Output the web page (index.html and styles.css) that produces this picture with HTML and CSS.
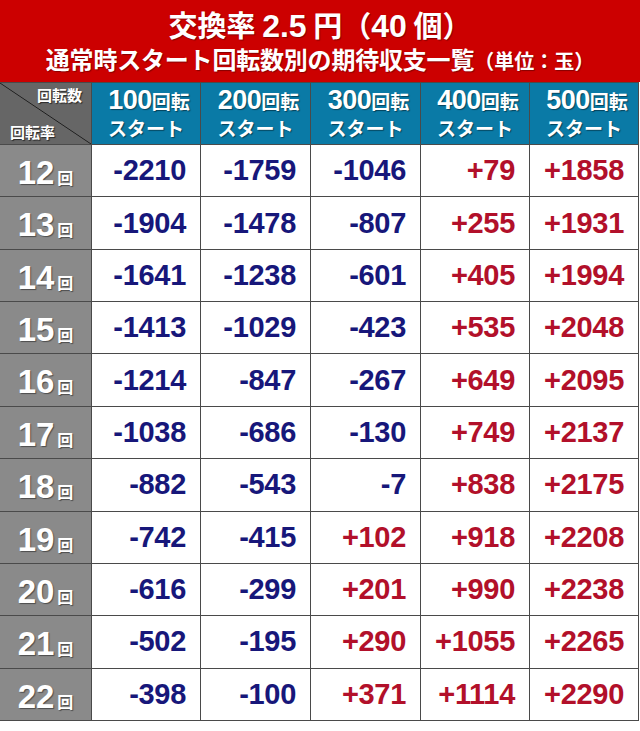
FILE: index.html
```html
<!DOCTYPE html>
<html lang="ja">
<head>
<meta charset="utf-8">
<title>交換率 2.5円 期待収支一覧</title>
<link rel="stylesheet" href="styles.css">
</head>
<body>
<div class="sheet">
  <header class="title">
    <div class="t1">交換率 <span class="lat">2.5</span> 円（<span class="lat">40</span> 個）</div>
    <div class="t2">通常時スタート回転数別の期待収支一覧<span class="unit">（単位：玉）</span></div>
  </header>
  <div class="grid">
    <div class="corner"><span class="c-top">回転数</span><span class="c-bot">回転率</span></div>
    <div class="colh"><div class="l1"><span class="n">100</span>回転</div><div class="l2">スタート</div></div>
    <div class="colh"><div class="l1"><span class="n">200</span>回転</div><div class="l2">スタート</div></div>
    <div class="colh"><div class="l1"><span class="n">300</span>回転</div><div class="l2">スタート</div></div>
    <div class="colh"><div class="l1"><span class="n">400</span>回転</div><div class="l2">スタート</div></div>
    <div class="colh"><div class="l1"><span class="n">500</span>回転</div><div class="l2">スタート</div></div>

    <div class="rowh"><span class="n">12</span><span class="k">回</span></div>
    <div class="v neg">-2210</div><div class="v neg">-1759</div><div class="v neg">-1046</div><div class="v pos">+79</div><div class="v pos">+1858</div>

    <div class="rowh"><span class="n">13</span><span class="k">回</span></div>
    <div class="v neg">-1904</div><div class="v neg">-1478</div><div class="v neg">-807</div><div class="v pos">+255</div><div class="v pos">+1931</div>

    <div class="rowh"><span class="n">14</span><span class="k">回</span></div>
    <div class="v neg">-1641</div><div class="v neg">-1238</div><div class="v neg">-601</div><div class="v pos">+405</div><div class="v pos">+1994</div>

    <div class="rowh"><span class="n">15</span><span class="k">回</span></div>
    <div class="v neg">-1413</div><div class="v neg">-1029</div><div class="v neg">-423</div><div class="v pos">+535</div><div class="v pos">+2048</div>

    <div class="rowh"><span class="n">16</span><span class="k">回</span></div>
    <div class="v neg">-1214</div><div class="v neg">-847</div><div class="v neg">-267</div><div class="v pos">+649</div><div class="v pos">+2095</div>

    <div class="rowh"><span class="n">17</span><span class="k">回</span></div>
    <div class="v neg">-1038</div><div class="v neg">-686</div><div class="v neg">-130</div><div class="v pos">+749</div><div class="v pos">+2137</div>

    <div class="rowh"><span class="n">18</span><span class="k">回</span></div>
    <div class="v neg">-882</div><div class="v neg">-543</div><div class="v neg">-7</div><div class="v pos">+838</div><div class="v pos">+2175</div>

    <div class="rowh"><span class="n">19</span><span class="k">回</span></div>
    <div class="v neg">-742</div><div class="v neg">-415</div><div class="v pos">+102</div><div class="v pos">+918</div><div class="v pos">+2208</div>

    <div class="rowh"><span class="n">20</span><span class="k">回</span></div>
    <div class="v neg">-616</div><div class="v neg">-299</div><div class="v pos">+201</div><div class="v pos">+990</div><div class="v pos">+2238</div>

    <div class="rowh"><span class="n">21</span><span class="k">回</span></div>
    <div class="v neg">-502</div><div class="v neg">-195</div><div class="v pos">+290</div><div class="v pos">+1055</div><div class="v pos">+2265</div>

    <div class="rowh"><span class="n">22</span><span class="k">回</span></div>
    <div class="v neg">-398</div><div class="v neg">-100</div><div class="v pos">+371</div><div class="v pos">+1114</div><div class="v pos">+2290</div>
  </div>
</div>
</body>
</html>
```

FILE: styles.css
```css
html, body {
  margin: 0;
  padding: 0;
  background: #ffffff;
}

body {
  font-family: "Noto Sans CJK JP", "Liberation Sans", sans-serif;
  width: 640px;
}

.sheet {
  width: 640px;
}

.title {
  background: #cc0000;
  height: 82px;
  box-sizing: border-box;
  padding-top: 7px;
  color: #ffffff;
  text-align: center;
  font-weight: 700;
  text-shadow: 1px 1px 1px rgba(0, 0, 0, 0.35);
}

.t1 {
  font-size: 29px;
  line-height: 34px;
  white-space: nowrap;
}

.t1 .lat {
  font-family: "Liberation Sans", sans-serif;
  font-size: 32px;
  font-weight: 700;
}

.t2 {
  font-size: 24px;
  line-height: 30px;
  margin-top: 1px;
  white-space: nowrap;
  letter-spacing: -0.2px;
}

.t2 .unit {
  font-size: 20px;
  letter-spacing: 0;
}

.grid {
  display: grid;
  grid-template-columns: 91px 108px 109px 109px 108px 108px;
  grid-template-rows: 61px repeat(11, 1fr);
  gap: 1px;
  width: 639px;
  height: 639px;
  box-sizing: border-box;
  padding: 1px 1px 1px 0;
  background: #4a4a4a;
}

.corner {
  background-color: #666666;
  background-image: linear-gradient(to top right, transparent calc(50% - 0.8px), #1e1e1e 50%, transparent calc(50% + 0.8px));
  display: flex;
  flex-direction: column;
  justify-content: space-between;
  padding: 2px 9px 3px 10px;
  color: #ffffff;
  font-size: 15px;
  font-weight: 700;
  line-height: 19px;
  text-shadow: 1px 1px 1px rgba(0, 0, 0, 0.6);
}

.c-top {
  align-self: flex-end;
}

.c-bot {
  align-self: flex-start;
}

.colh {
  background: #0a7aa6;
  color: #ffffff;
  display: flex;
  flex-direction: column;
  align-items: center;
  justify-content: center;
  font-weight: 700;
  text-shadow: 1px 1px 1px rgba(0, 0, 0, 0.45);
  padding-bottom: 1px;
}

.colh .l1 {
  font-size: 19px;
  line-height: 28px;
  white-space: nowrap;
  padding-left: 6px;
}

.colh .n {
  font-family: "Liberation Sans", sans-serif;
  font-size: 27px;
  font-weight: 700;
  letter-spacing: -0.5px;
}

.colh .l2 {
  font-size: 19px;
  line-height: 26px;
  white-space: nowrap;
}

.rowh {
  background: #8a8a8a;
  color: #ffffff;
  display: flex;
  align-items: baseline;
  justify-content: center;
  padding-top: 8px;
  box-sizing: border-box;
  text-shadow: 1px 1px 1px rgba(0, 0, 0, 0.45);
}

.rowh .n {
  font-family: "Liberation Sans", sans-serif;
  font-size: 33px;
  font-weight: 700;
  line-height: 40px;
}

.rowh .k {
  font-size: 16px;
  font-weight: 700;
  margin-left: 3px;
}

.v {
  background: #ffffff;
  display: flex;
  align-items: center;
  justify-content: flex-end;
  padding-right: 14px;
  font-family: "Liberation Sans", sans-serif;
  font-size: 29px;
  font-weight: 700;
  letter-spacing: -0.3px;
}

.neg {
  color: #17177a;
}

.pos {
  color: #b2102a;
}
```
